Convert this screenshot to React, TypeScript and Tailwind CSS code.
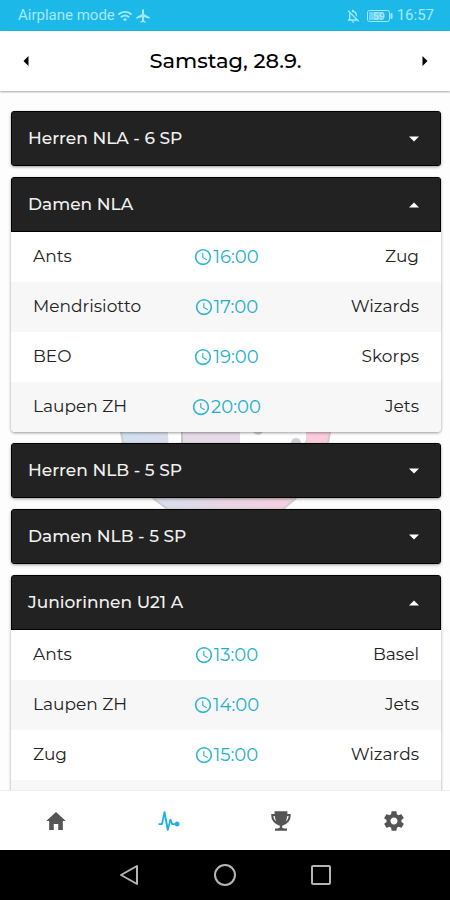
import { useState } from "react";
import { IoMdHome, IoMdPulse, IoMdTrophy, IoMdSettings, IoMdTime, IoMdArrowDropdown, IoMdArrowDropup, IoMdArrowDropleft, IoMdArrowDropright } from "react-icons/io";
import { MdAirplanemodeActive, MdOutlineNotificationsOff, MdWifi } from "react-icons/md";

type Game = { home: string; time: string; away: string };
type League = { name: string; games: Game[] };

const leagues: League[] = [
  { name: "Herren NLA - 6 SP", games: [] },
  {
    name: "Damen NLA",
    games: [
      { home: "Ants", time: "16:00", away: "Zug" },
      { home: "Mendrisiotto", time: "17:00", away: "Wizards" },
      { home: "BEO", time: "19:00", away: "Skorps" },
      { home: "Laupen ZH", time: "20:00", away: "Jets" },
    ],
  },
  { name: "Herren NLB - 5 SP", games: [] },
  { name: "Damen NLB - 5 SP", games: [] },
  {
    name: "Juniorinnen U21 A",
    games: [
      { home: "Ants", time: "13:00", away: "Basel" },
      { home: "Laupen ZH", time: "14:00", away: "Jets" },
      { home: "Zug", time: "15:00", away: "Wizards" },
      { home: "", time: "", away: "" },
    ],
  },
];

function StatusBar() {
  return (
    <div className="flex h-[31px] shrink-0 items-center bg-[#1cb9e8] pr-4 pl-[18px] font-[Roboto,sans-serif] text-[15px] text-[#a5e8fa]">
      <span>Airplane mode</span>
      <MdWifi className="ml-0.5 size-4" />
      <MdAirplanemodeActive className="ml-0.5 size-4" />
      <MdOutlineNotificationsOff className="ml-auto size-4" />
      <svg className="ml-1.5 h-3 w-7" viewBox="0 0 28 12" aria-hidden="true">
        <rect x="0.5" y="0.5" width="22" height="11" rx="2" fill="none" stroke="currentColor" />
        <rect x="2" y="2" width="13" height="8" fill="currentColor" opacity="0.6" />
        <rect x="23.5" y="3" width="2" height="6" rx="1" fill="currentColor" />
        <text x="12" y="10" fontSize="10" fontWeight="700" textAnchor="middle" fill="currentColor">59</text>
      </svg>
      <span className="ml-0.5">16:57</span>
    </div>
  );
}

function DateHeader() {
  return (
    <header className="z-10 flex h-[60px] shrink-0 items-center justify-between bg-white pr-[15px] pl-4 shadow-[0_1px_2px_rgba(0,0,0,0.35)]">
      <button aria-label="Vorheriger Tag"><IoMdArrowDropleft className="size-5" /></button>
      <h1 className="text-[21px] font-medium">Samstag, 28.9.</h1>
      <button aria-label="Nächster Tag"><IoMdArrowDropright className="size-5" /></button>
    </header>
  );
}

function Emblem() {
  return (
    <svg className="absolute inset-x-0 top-[209px] mx-auto h-[212px] w-[212px]" viewBox="0 0 212 212" aria-hidden="true">
      <defs>
        <linearGradient id="tint">
          <stop offset="0" stopColor="#cfe2f1" />
          <stop offset="0.5" stopColor="#e8d6e4" />
          <stop offset="1" stopColor="#fccbdc" />
        </linearGradient>
      </defs>
      <path d="M62 3H150L211 62V132Q206 168 176 199L163 210H50L35 199Q8 172 2 132V62Z" fill="url(#tint)" stroke="#d0cdd2" strokeWidth="2" />
      <path d="M44 60H187V140L164 182H50V150Z" fill="#fff" />
      <path d="M63 60H121V170H63Z" fill="#e5dbe7" />
      <path d="M63 60V170" stroke="#c9c5cb" strokeWidth="2" />
      <circle cx="139" cy="130" r="5" fill="#d3cdd3" />
      <circle cx="177" cy="143" r="5" fill="#d3cdd3" />
    </svg>
  );
}

function LeagueCard({ league }: { league: League }) {
  const [open, setOpen] = useState(league.games.length > 0);
  const Arrow = open ? IoMdArrowDropup : IoMdArrowDropdown;
  return (
    <section className="relative overflow-hidden rounded-[4px] bg-white shadow-[0_1px_3px_rgba(0,0,0,0.4)]">
      <button
        aria-expanded={open}
        onClick={() => setOpen(!open)}
        className="flex h-[55px] w-full items-center justify-between border border-black bg-[#222] px-4 text-left text-[17px] font-medium text-[#f1f1f1]"
      >
        {league.name}
        <Arrow className="size-5 text-white" />
      </button>
      {open && (
        <ul>
          {league.games.map((game, i) => (
            <li key={i} className="grid h-[50px] grid-cols-3 items-center px-[22px] text-[17px] text-[#222] even:bg-[#f7f7f7]">
              <span>{game.home}</span>
              {game.time && (
                <span className="flex items-center justify-center text-lg text-[#1fafcd]">
                  <IoMdTime className="size-5" />
                  {game.time}
                </span>
              )}
              <span className="text-right">{game.away}</span>
            </li>
          ))}
        </ul>
      )}
    </section>
  );
}

const tabs = [
  { label: "Start", Icon: IoMdHome, active: false },
  { label: "Spiele", Icon: IoMdPulse, active: true },
  { label: "Ranglisten", Icon: IoMdTrophy, active: false },
  { label: "Einstellungen", Icon: IoMdSettings, active: false },
];

function SystemBar() {
  return (
    <div className="flex h-[50px] shrink-0 items-center justify-center gap-[72px] bg-black text-[#b5b5b5]">
      <button aria-label="Zurück">
        <svg className="size-6" viewBox="0 0 24 24" fill="none" stroke="currentColor" strokeWidth="2" strokeLinejoin="round"><path d="M20 3V21L4 12Z" /></svg>
      </button>
      <button aria-label="Startbildschirm">
        <svg className="size-6" viewBox="0 0 24 24" fill="none" stroke="currentColor" strokeWidth="2"><circle cx="12" cy="12" r="10" /></svg>
      </button>
      <button aria-label="Übersicht">
        <svg className="size-6" viewBox="0 0 24 24" fill="none" stroke="currentColor" strokeWidth="2"><rect x="3" y="3" width="18" height="18" rx="1" /></svg>
      </button>
    </div>
  );
}

export default function App() {
  return (
    <div className="flex h-screen flex-col bg-[#fdfdfd] font-[Montserrat,Inter,sans-serif] text-black">
      <StatusBar />
      <DateHeader />
      <main className="relative min-h-0 flex-1 overflow-y-auto [scrollbar-width:none]">
        <Emblem />
        <div className="flex flex-col gap-[11px] pt-5 pr-[9px] pl-[11px]">
          {leagues.map((league) => (
            <LeagueCard key={league.name} league={league} />
          ))}
        </div>
      </main>
      <nav className="z-10 grid h-[60px] shrink-0 grid-cols-4 border-t border-[#eee] bg-white">
        {tabs.map(({ label, Icon, active }) => (
          <button key={label} aria-label={label} className={active ? "flex items-center justify-center text-[#19b3dd]" : "flex items-center justify-center text-[#555]"}>
            <Icon className="size-6" />
          </button>
        ))}
      </nav>
      <SystemBar />
    </div>
  );
}
